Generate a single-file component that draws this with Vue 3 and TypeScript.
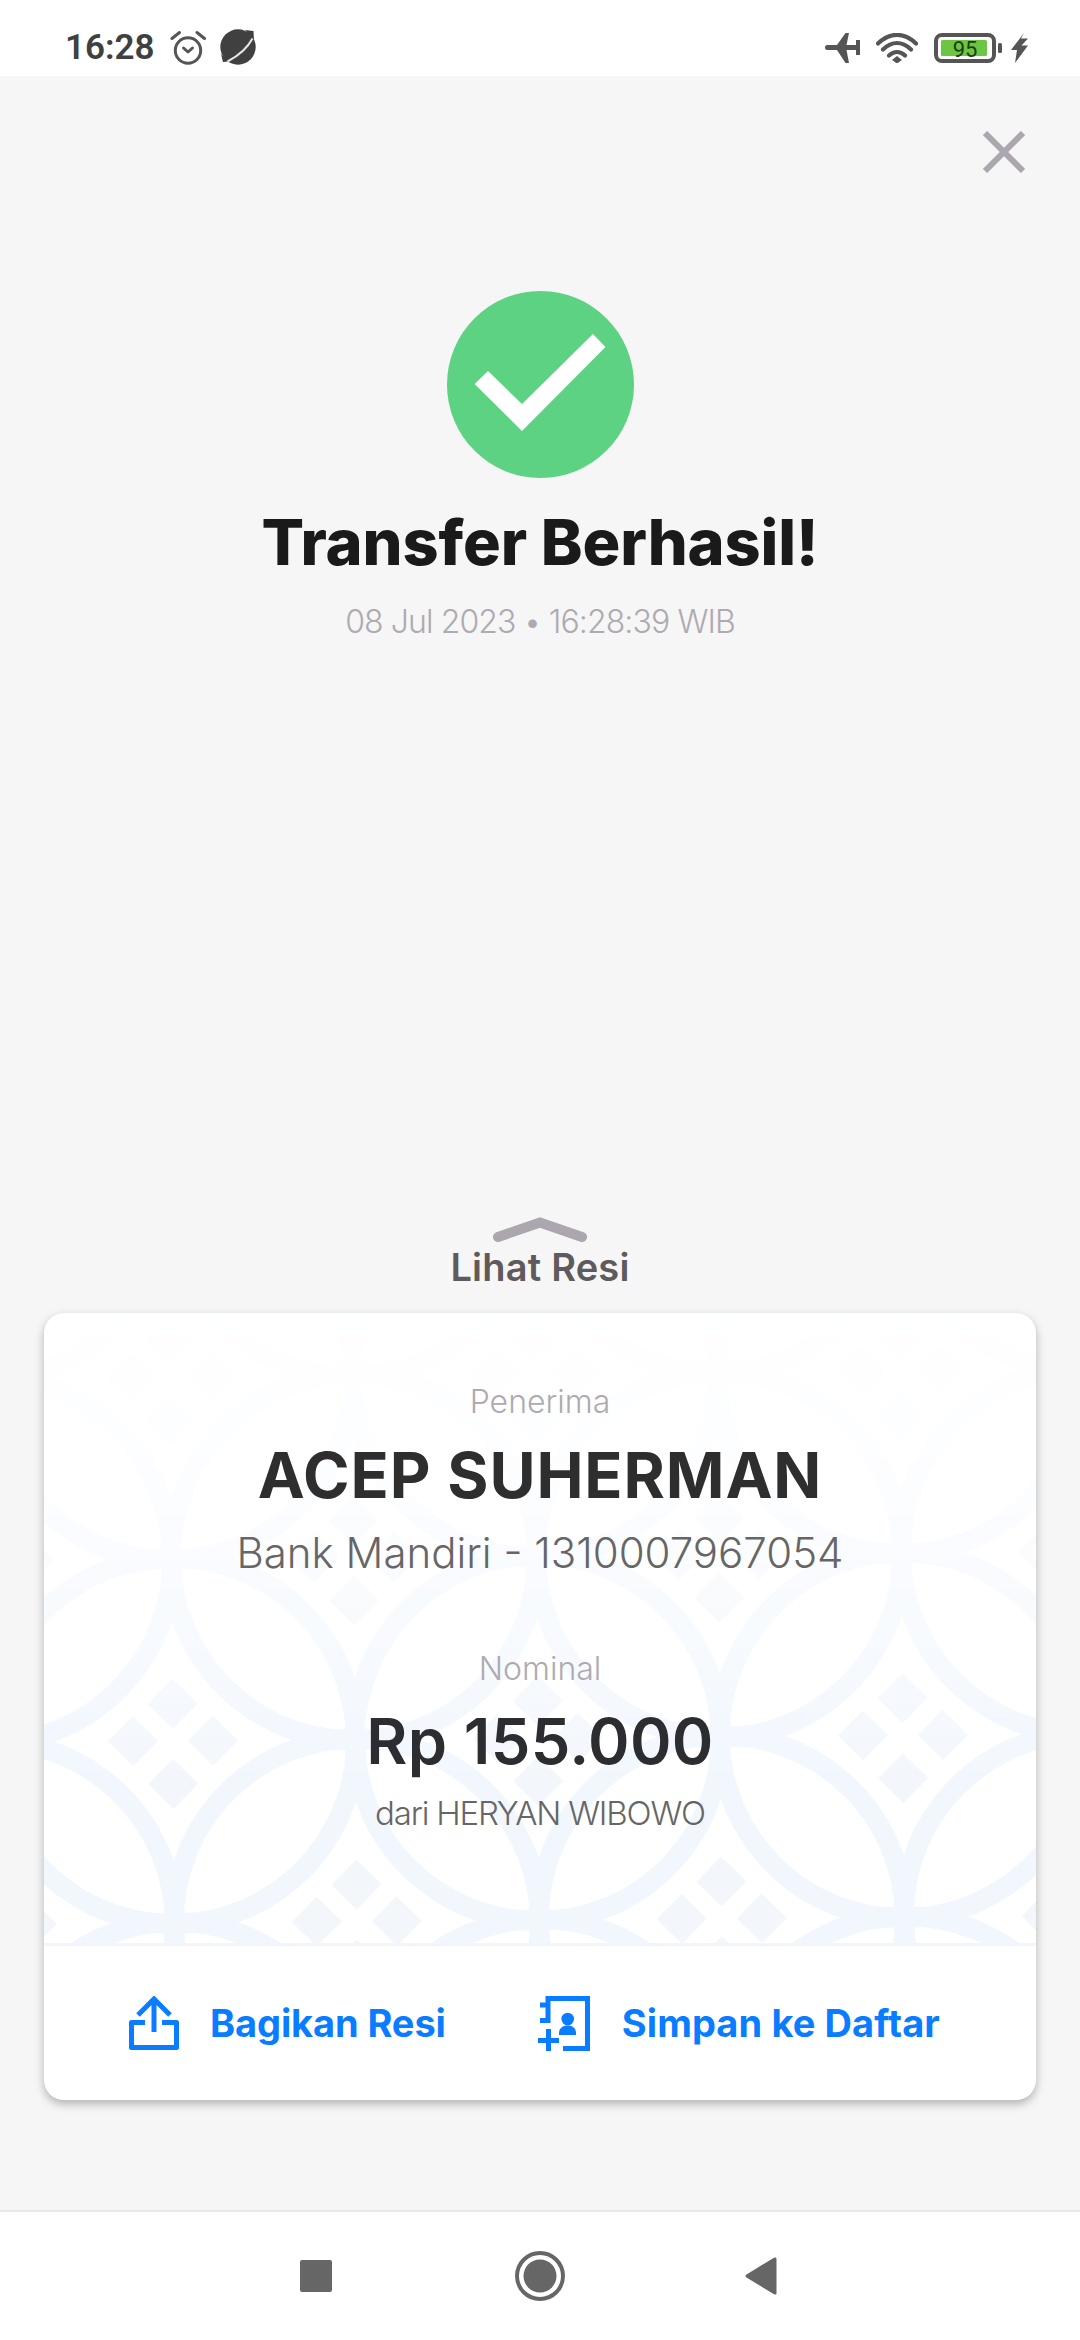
<script setup lang="ts">
interface Pt { x: number; y: number }
const lattice: Pt[] = []
for (let i = -2; i <= 7; i++) {
  for (let j = -3; j <= 5; j++) {
    if (((i + j) % 2 + 2) % 2 === 0) {
      lattice.push({ x: 128 + i * 182.5, y: 425 + j * 182 })
    }
  }
}
const diamond = (p: Pt, dx: number, dy: number, r: number): string =>
  `${p.x + dx},${p.y + dy - r} ${p.x + dx + r},${p.y + dy} ${p.x + dx},${p.y + dy + r} ${p.x + dx - r},${p.y + dy}`
</script>

<template>
  <div class="page">
    <header class="status">
      <div class="status-left">
        <span class="time">16:28</span>
        <svg class="ic-alarm" viewBox="170 30 36 36" width="36" height="36">
          <circle cx="188" cy="50.500" r="12.700" fill="none" stroke="#555" stroke-width="3" />
          <path d="M183.500 48L188 52L192.500 48" fill="none" stroke="#555" stroke-width="3" stroke-linecap="round" stroke-linejoin="round" />
          <path d="M172 38.500L179.500 32.500M204.500 38.500L197 32.500" fill="none" stroke="#555" stroke-width="3" stroke-linecap="round" />
        </svg>
        <svg class="ic-planet" viewBox="221 29 36 36" width="36" height="36">
          <circle cx="239" cy="47" r="17.700" fill="#404040" />
          <path d="M246 30L254.500 31L255 41ZM222 54L229.500 61.500L224 62Z" fill="#404040" />
          <path d="M253.500 38.500C249 47 239 56 228.500 61.500" fill="none" stroke="#e6e6e6" stroke-width="2" />
        </svg>
      </div>
      <div class="status-right">
        <svg viewBox="825 33 35 30" width="35" height="30">
          <path d="M827.500 45H837L845.500 33H849L846.500 45H856V40H860V55H856V50H846.500L849 63H845.500L837 50H827.500a2.500 2.500 0 0 1 0-5Z" fill="#555" />
        </svg>
        <svg class="ic-wifi" viewBox="876 33 42 30" width="42" height="30">
          <path d="M878 43.500C890 32 904 32 916 43.500M883 49.500C892 41 902 41 911 49.500M889 55.500C894 51 900 51 905 55.500" fill="none" stroke="#555" stroke-width="4.200" stroke-linecap="round" />
          <path d="M897 56l5 4-5 3.500-5-3.500Z" fill="#555" />
        </svg>
        <svg class="ic-batt" viewBox="934 33 68 30" width="68" height="30">
          <rect x="936" y="35" width="58" height="26" rx="6" fill="none" stroke="#555" stroke-width="4" />
          <rect x="941" y="40" width="46" height="16" rx="1.500" fill="#6cc644" />
          <rect x="998" y="43" width="4" height="10" rx="1.500" fill="#555" />
          <text x="965" y="56.500" text-anchor="middle" class="batt-text">95</text>
        </svg>
        <svg class="ic-bolt" viewBox="1011 33 17 30" width="17" height="30">
          <path d="M1024 33L1011 50H1017L1015 63L1028 45.500H1021.500L1028 38.500H1021Z" fill="#555" />
        </svg>
      </div>
    </header>

    <main class="main">
      <div class="close-row">
        <svg viewBox="0 0 42 42" width="42" height="42">
          <path d="M2 2L40 40M40 2L2 40" stroke="#aca6ae" stroke-width="6" fill="none" />
        </svg>
      </div>

      <section class="hero">
        <svg class="check" viewBox="447 291 187 187" width="187" height="187">
          <circle cx="540.500" cy="384.500" r="93.500" fill="#5dd283" />
          <polygon points="593,334 605.500,347 522,431 474.600,384 488,371 522,404" fill="#fff" />
        </svg>
        <h1 class="title">Transfer Berhasil!</h1>
        <p class="date">08 Jul 2023 • 16:28:39 WIB</p>
      </section>

      <div class="spacer"></div>

      <div class="peek">
        <svg viewBox="0 0 94 25" width="94" height="25">
          <path d="M5 20L47 5.500L89 20" fill="none" stroke="#aca6ae" stroke-width="10" stroke-linecap="round" />
        </svg>
        <span class="peek-label">Lihat Resi</span>
      </div>

      <section class="card">
        <div class="card-top">
          <svg class="pattern" viewBox="0 0 992 630" width="992" height="630" aria-hidden="true">
            <defs>
              <linearGradient id="fade" x1="0" y1="0" x2="0" y2="1">
                <stop offset="0" stop-color="#fff" stop-opacity="0.04" />
                <stop offset="0.25" stop-color="#fff" stop-opacity="0.2" />
                <stop offset="0.5" stop-color="#fff" stop-opacity="0.6" />
                <stop offset="0.75" stop-color="#fff" stop-opacity="1" />
              </linearGradient>
              <mask id="fade-mask">
                <rect x="0" y="0" width="992" height="630" fill="url(#fade)" />
              </mask>
            </defs>
            <g mask="url(#fade-mask)">
              <g transform="rotate(-0.45 496 315)">
                <g v-for="(p, idx) in lattice" :key="idx">
                  <circle :cx="p.x" :cy="p.y" r="183" fill="none" stroke="#f2f7fe" stroke-width="20" />
                  <polygon :points="diamond(p, 0, -37, 25)" fill="#f3f7fc" />
                  <polygon :points="diamond(p, 40, 0, 25)" fill="#f3f7fc" />
                  <polygon :points="diamond(p, -40, 0, 25)" fill="#f3f7fc" />
                  <polygon :points="diamond(p, 0, 43, 25)" fill="#f3f7fc" />
                </g>
              </g>
            </g>
          </svg>
          <div class="details">
            <span class="label">Penerima</span>
            <strong class="name">ACEP SUHERMAN</strong>
            <span class="bank">Bank Mandiri - 1310007967054</span>
            <span class="label nominal-label">Nominal</span>
            <strong class="amount">Rp 155.000</strong>
            <span class="from">dari HERYAN WIBOWO</span>
          </div>
        </div>
        <div class="actions">
          <div class="action share">
            <svg viewBox="129 1996 50 54" width="50" height="54">
              <path d="M154 2032V1999M138 2015L154 1999L170 2015" fill="none" stroke="#0a7cff" stroke-width="5" />
              <path d="M145 2022.500H131.500V2047.500H176.500V2022.500H162" fill="none" stroke="#0a7cff" stroke-width="5" stroke-linejoin="round" />
            </svg>
            <span class="t-share">Bagikan Resi</span>
          </div>
          <div class="action save">
            <svg viewBox="537 1995 52 55" width="52" height="55">
              <path d="M547 2022V1997.500H586.500V2047.500H562" fill="none" stroke="#0a7cff" stroke-width="5" />
              <path d="M539 2004H548M539 2019.500H548M537 2039.500H558M547.500 2028V2050" fill="none" stroke="#0a7cff" stroke-width="5" />
              <circle cx="566.700" cy="2018" r="6.300" fill="#0a7cff" />
              <path d="M558 2034V2032C558 2027 562 2024.500 566.700 2024.500S575 2027 575 2032V2034Z" fill="#0a7cff" />
            </svg>
            <span class="t-save">Simpan ke Daftar</span>
          </div>
        </div>
      </section>
    </main>

    <nav class="nav">
      <span class="nav-square"></span>
      <svg viewBox="0 0 50 50" width="50" height="50">
        <circle cx="25" cy="25" r="23" fill="none" stroke="#666" stroke-width="4" />
        <circle cx="25" cy="25" r="16.500" fill="#666" />
      </svg>
      <svg class="nav-back" viewBox="0 0 32 38" width="32" height="38">
        <path d="M1.500 17.500L29 .8C30.500 0 31.500 .8 31.500 2V36C31.500 37.500 30.500 38 29 37.200L1.500 20.500C0 19.500 0 18.500 1.500 17.500Z" fill="#666" />
      </svg>
    </nav>
  </div>
</template>

<style>
html, body {
  margin: 0;
  padding: 0;
  background: #f6f6f6;
}
</style>

<style scoped>
.page {
  width: 1080px;
  height: 2340px;
  display: flex;
  flex-direction: column;
  background: #f6f6f6;
  font-family: Inter, "Liberation Sans", sans-serif;
  overflow: hidden;
}
.status {
  height: 76px;
  flex: none;
  background: #fff;
  display: flex;
  justify-content: space-between;
  align-items: flex-start;
  box-sizing: border-box;
  padding: 29px 52px 0 65px;
}
.status-left {
  display: flex;
  align-items: flex-start;
}
.time {
  font-family: Roboto, sans-serif;
  font-weight: 600;
  font-size: 35px;
  line-height: 36px;
  margin-top: 1px;
  color: #404040;
  width: 105px;
}
.ic-alarm {
  margin-top: 1px;
}
.ic-planet {
  margin-left: 14px;
}
.status-right {
  display: flex;
  align-items: flex-start;
  padding-top: 4px;
}
.ic-wifi {
  margin-left: 16px;
}
.ic-batt {
  margin-left: 16px;
}
.ic-bolt {
  margin-left: 9px;
}
.batt-text {
  font-family: Roboto, sans-serif;
  font-size: 22px;
  fill: #1e3d10;
}
.main {
  flex: 1;
  display: flex;
  flex-direction: column;
  min-height: 0;
}
.close-row {
  display: flex;
  justify-content: flex-end;
  padding: 55px 55px 0 0;
  height: 42px;
}
.close-row svg {
  display: block;
}
.hero {
  display: flex;
  flex-direction: column;
  align-items: center;
  margin-top: 118px;
}
.check {
  display: block;
}
.title {
  margin: 26px 0 0;
  font-size: 63px;
  line-height: 76px;
  font-weight: 800;
  color: #1a1a1a;
  letter-spacing: -0.1px;
}
.date {
  margin: 22px 0 0;
  font-size: 32px;
  line-height: 40px;
  font-weight: 300;
  color: #aeaab0;
  letter-spacing: -0.9px;
}
.spacer {
  flex: 1;
}
.peek {
  display: flex;
  flex-direction: column;
  align-items: center;
}
.peek svg {
  display: block;
}
.peek-label {
  margin-top: 3px;
  font-size: 38px;
  line-height: 44px;
  font-weight: 600;
  color: #5f5a5c;
  letter-spacing: 0.2px;
}
.card {
  margin: 24px 44px 110px;
  width: 992px;
  background: #fff;
  border-radius: 20px;
  box-shadow: 0 4px 10px rgba(0, 0, 0, 0.28);
  overflow: hidden;
  flex: none;
}
.card-top {
  position: relative;
  height: 630px;
  border-bottom: 3px solid #f2f6fb;
  overflow: hidden;
}
.pattern {
  position: absolute;
  left: 0;
  top: 0;
}
.details {
  position: relative;
  display: flex;
  flex-direction: column;
  align-items: center;
  padding-top: 69px;
}
.label {
  font-size: 32px;
  line-height: 40px;
  font-weight: 300;
  color: #aeaab0;
}
.name {
  margin-top: 15px;
  font-size: 63px;
  line-height: 76px;
  font-weight: 700;
  color: #2e2e2e;
  letter-spacing: 0.9px;
}
.bank {
  margin-top: 15px;
  font-size: 42px;
  line-height: 50px;
  font-weight: 300;
  color: #666;
}
.nominal-label {
  margin-top: 71px;
}
.amount {
  margin-top: 14px;
  font-size: 63px;
  line-height: 76px;
  font-weight: 600;
  color: #2b2d30;
  letter-spacing: 0.4px;
}
.from {
  margin-top: 14px;
  font-size: 33px;
  line-height: 40px;
  font-weight: 300;
  color: #666;
  letter-spacing: -1.2px;
}
.actions {
  height: 154px;
  display: flex;
  align-items: center;
  color: #0a7cff;
  font-size: 38px;
  font-weight: 700;
}
.action {
  display: flex;
  align-items: center;
}
.action svg {
  display: block;
  flex: none;
}
.t-share {
  letter-spacing: -0.1px;
}
.t-save {
  letter-spacing: 0.1px;
}
.share {
  margin-left: 85px;
}
.share svg {
  margin-right: 31px;
}
.save {
  margin-left: 92px;
}
.save svg {
  margin-right: 32px;
}
.nav {
  height: 130px;
  flex: none;
  background: #fff;
  border-top: 2px solid #e8e8e8;
  box-sizing: border-box;
  display: grid;
  grid-template-columns: 32px 50px 32px;
  justify-content: start;
  align-items: center;
  column-gap: 183px;
  padding-left: 300px;
}
.nav svg {
  display: block;
}
.nav-back {
  margin-left: -3px;
}
.nav-square {
  display: block;
  width: 32px;
  height: 32px;
  border-radius: 2px;
  background: #666;
}
</style>
